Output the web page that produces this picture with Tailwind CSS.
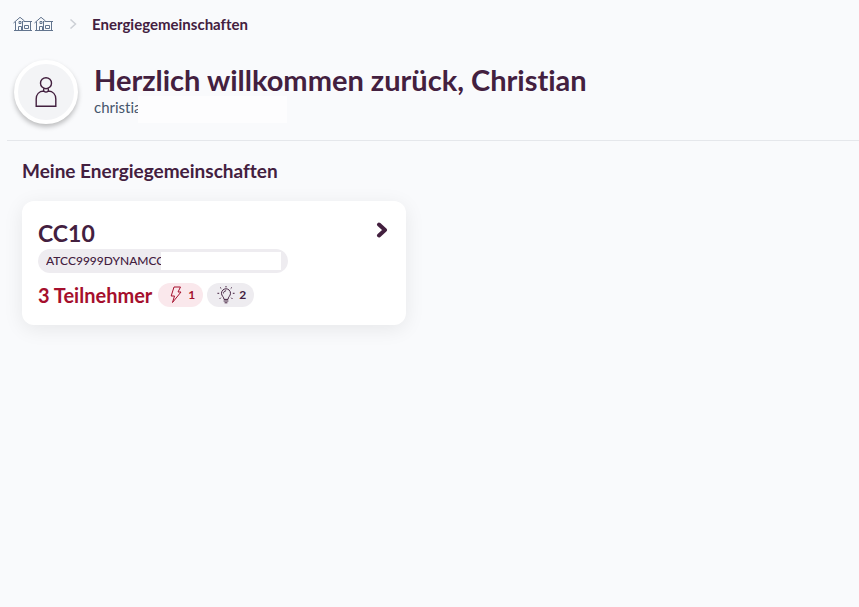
<!DOCTYPE html>
<html lang="de">

<head>
    <meta charset="UTF-8" />
    <meta name="viewport" content="width=device-width, initial-scale=1.0" />
    <title>Energiegemeinschaften</title>
    <script src="https://cdn.jsdelivr.net/npm/@tailwindcss/browser@4"></script>
</head>

<body class="min-h-screen bg-[#f9fafc] font-['Lato',sans-serif] text-[#43203f] [font-variant-ligatures:none]">
    <svg class="hidden">
        <symbol id="house" viewBox="0 0 20 16" fill="none" stroke="currentColor" stroke-width="1">
            <path d="M0.5 7 L7 1.3 L11.5 5 M2.5 5.5 V14.5 M1 14.5 H19 M10.5 5.5 H19 M17.5 5.5 V14.5" />
            <path d="M5.5 14 V10.5 H8.5 V14 M6 5.5 H8 V7.5 H6 Z M11.5 9.5 H15.5 V12.5 H11.5 Z M9.5 5 V14" />
        </symbol>
    </svg>

    <nav class="flex h-12 items-center px-[13px]" aria-label="Breadcrumb">
        <a href="#" class="flex gap-px text-slate-500" aria-label="Startseite">
            <svg class="h-4 w-5"><use href="#house" /></svg>
            <svg class="h-4 w-5"><use href="#house" /></svg>
        </a>
        <svg class="mx-[14px] size-2.5 shrink-0" viewBox="0 0 10 10" fill="none" stroke="#cdd0d6" stroke-width="1.5">
            <path d="M2.5 0.5 L7.5 5 L2.5 9.5" />
        </svg>
        <a href="#" class="text-[15px] font-bold">Energiegemeinschaften</a>
    </nav>

    <header class="ml-[7px] flex gap-4 border-b border-gray-200 pt-3 pb-4 pl-[7px]">
        <div class="flex size-16 shrink-0 items-center justify-center rounded-full border-4 border-white bg-gray-100 shadow-[0_3px_5px_rgba(0,0,0,0.25)]">
            <svg class="h-8 w-6" viewBox="0 0 24 32" fill="none" stroke="currentColor" stroke-width="1.4">
                <circle cx="12" cy="7.2" r="5.5" />
                <path d="M9.7 12.3 V15 M14.3 12.3 V15 M9.7 15 C5 15.2 2.2 18.5 2.2 23 V30.2 H21.8 V23 C21.8 18.5 19 15.2 14.3 15 C13 16.2 11 16.2 9.7 15 Z" />
            </svg>
        </div>
        <div>
            <h1 class="pt-1 text-[29px] leading-8 font-bold">Herzlich willkommen zurück, Christian</h1>
            <div class="flex h-[27px] text-slate-600">
                <p class="w-11 overflow-hidden text-[15px] leading-[22px]">christia</p>
                <div class="w-[149px] bg-[#fdfdfe]"></div>
            </div>
        </div>
    </header>

    <main class="px-[22px] pt-4">
        <h2 class="text-[19px] leading-7 font-bold">Meine Energiegemeinschaften</h2>

        <a href="#" class="mt-4 block max-w-96 rounded-xl bg-white p-4 shadow-[0_4px_20px_rgba(0,0,0,0.08)]">
            <div class="flex items-center justify-between">
                <h3 class="text-[23px] leading-8 font-bold">CC10</h3>
                <svg class="mr-0.5 mb-1.5 h-4 w-3" viewBox="0 0 12 16" fill="none" stroke="currentColor" stroke-width="4" stroke-linecap="round" stroke-linejoin="round">
                    <path d="M3 2.5 L9 8 L3 13.5" />
                </svg>
            </div>

            <div class="flex h-6 w-[250px] items-center rounded-full bg-[#eeecf0] pl-2 text-xs font-medium">
                <span class="w-[115px] overflow-hidden whitespace-nowrap">ATCC9999DYNAMCC</span>
                <span class="h-[18px] w-[120px] bg-white"></span>
            </div>

            <div class="mt-2 flex items-center gap-1">
                <p class="mr-0.5 text-xl font-bold text-[#a50f2d]">3 Teilnehmer</p>
                <span class="flex h-6 items-center gap-1 rounded-full bg-[#fae8ec] px-2 text-xs font-bold text-[#a50f2d]">
                    <svg class="size-[18px]" viewBox="0 0 18 18" fill="none" stroke="currentColor" stroke-linejoin="round">
                        <path d="M8 1 H14.5 L12 6 H15 L6.5 16.5 L8.5 10 H5.2 Z" />
                    </svg>
                    1
                </span>
                <span class="flex h-6 items-center gap-1 rounded-full bg-[#eeecf0] pr-2 pl-2.5 text-xs font-bold">
                    <svg class="size-[18px]" viewBox="0 0 18 18" fill="none" stroke="currentColor" stroke-linecap="round">
                        <path d="M7 13 C7 11 4.5 10 4.5 7.3 A4.5 4.5 0 0 1 13.5 7.3 C13.5 10 11 11 11 13 Z M7 15 H11 M8 16.8 H10 M6.5 7 C6.5 5.8 7.5 5 8.7 4.8" />
                        <path d="M9 0.3 V1 M4 2.3 L3.4 1.7 M14 2.3 L14.6 1.7 M1.8 7.3 H0.8 M16.2 7.3 H17.2 M3.5 12 L2.8 12.7 M14.5 12 L15.2 12.7" />
                    </svg>
                    2
                </span>
            </div>
        </a>
    </main>
</body>

</html>
